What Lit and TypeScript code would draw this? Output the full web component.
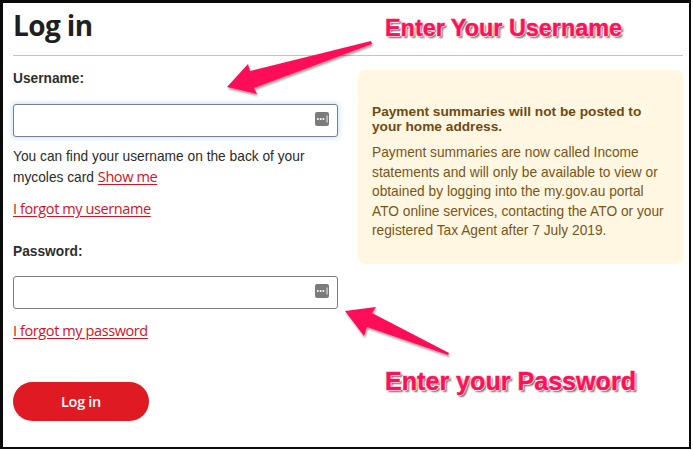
import { LitElement, html, css, svg } from "lit";
import { customElement } from "lit/decorators.js";

const keyIcon = svg`<svg class="key" width="14" height="14" viewBox="0 0 14 14" aria-hidden="true">
  <rect x="0" y="0" width="14" height="14" rx="2" fill="#7b7b7b"/>
  <circle cx="2.8" cy="7" r="1" fill="#fff"/><circle cx="5.6" cy="7" r="1" fill="#fff"/><circle cx="8.4" cy="7" r="1" fill="#fff"/>
  <rect x="11.6" y="3.5" width="0.9" height="7" fill="#fff"/>
</svg>`;

@customElement("app-root")
export class AppRoot extends LitElement {
  static styles = css`
    :host { display: block; width: 693px; height: 450px; background: #fff; }
    * { box-sizing: border-box; }
    .frame {
      position: relative; width: 691px; height: 449px; background: #fff; overflow: hidden;
      border-style: solid; border-color: #0a0a0a; border-width: 3px 2px 2px 3px;
      padding: 0 6px 0 10px; color: #2b2b2b;
      font: 13.75px/20px "Liberation Sans", Arial, sans-serif;
    }
    h1 {
      margin: 0; height: 53px; padding-top: 3px; border-bottom: 1px solid #c4c4c4;
      font: 700 28px/38px "Open Sans", sans-serif; letter-spacing: -0.6px; color: #1f1f1f;
    }
    .cols { display: flex; gap: 20px; }
    .left { width: 325px; flex: none; padding-top: 13px; }
    .right { flex: 1; padding-top: 14px; }
    label { display: block; font-weight: 700; line-height: 20px; color: #2e2e2e; }
    .field {
      display: flex; align-items: center; justify-content: flex-end;
      height: 33px; padding: 0 8px 4px 0; background: #fff;
      border: 1px solid #7d7d7d; border-radius: 3px;
    }
    .field.focus { margin-top: 15px; border-color: #76808e; box-shadow: 0 0 5px 1px rgba(120,175,235,.4); }
    .field.pw { margin-top: 14px; }
    .key { display: block; }
    .hint { margin: 10px 0 0; }
    a { color: #d8101f; text-decoration: underline; text-underline-offset: 2px; font: 14.5px/20px "Open Sans", sans-serif; letter-spacing: -0.4px; }
    .link { margin: 11px 0 0; }
    .pwlabel { margin-top: 22px; }
    .pwlink { margin-top: 12px; }
    button {
      display: block; width: 136px; height: 39px; margin-top: 40px; padding: 0; border: 0; border-radius: 20px;
      background: #e01a23; color: #fff; font: 600 14.5px "Open Sans", sans-serif; letter-spacing: -0.3px;
    }
    .notice {
      height: 194px; padding: 34px 14px 0; background: #fff7e1; border-radius: 7px; color: #7a5518;
      line-height: 19.5px;
    }
    .notice h2 { margin: 0 0 9px; font-size: 13.7px; line-height: 15px; font-weight: 700; color: #6f4a12; }
    .notice p { margin: 0; }
    .arrows { position: absolute; left: -3px; top: -3px; pointer-events: none; }
    .note {
      position: absolute; white-space: nowrap; color: #ff1059;
      font: 700 23.4px/26px "Liberation Sans", Arial, sans-serif;
      -webkit-text-stroke: 0.5px #ff1059;
      text-shadow: 1px 0 0 #fff, -1px 0 0 #fff, 0 -1px 0 #fff, 0 1px 0 #fff, 2px 2px 2px rgba(0,0,0,.6);
    }
    .n1 { left: 382px; top: 12px; }
    .n2 { left: 382px; top: 365px; font-size: 25.1px; }
  `;

  render() {
    return html`
      <div class="frame">
        <h1>Log in</h1>
        <div class="cols">
          <div class="left">
            <label>Username:</label>
            <div class="field focus">${keyIcon}</div>
            <p class="hint">You can find your username on the back of your<br />mycoles card <a href="#">Show me</a></p>
            <p class="link"><a href="#">I forgot my username</a></p>
            <label class="pwlabel">Password:</label>
            <div class="field pw">${keyIcon}</div>
            <p class="link pwlink"><a href="#">I forgot my password</a></p>
            <button>Log in</button>
          </div>
          <div class="right">
            <div class="notice">
              <h2>Payment summaries will not be posted to your home address.</h2>
              <p>Payment summaries are now called Income statements and will only be available to view or obtained by logging into the my.gov.au portal ATO online services, contacting the ATO or your registered Tax Agent after 7 July 2019.</p>
            </div>
          </div>
        </div>
        <svg class="arrows" width="693" height="450" viewBox="0 0 693 450" aria-hidden="true">
          <defs><filter id="s" x="-20%" y="-20%" width="140%" height="140%"><feDropShadow dx="1" dy="2" stdDeviation="1" flood-color="#000" flood-opacity=".4"/></filter></defs>
          <polygon filter="url(#s)" fill="#ff1059" points="227,87 248,64 250,71 371,41 372,44 254,88 257,94"/>
          <polygon filter="url(#s)" fill="#ff1059" points="345,311 376,307 372,313 449,353 448,355 367,327 364,336"/>
        </svg>
        <div class="note n1">Enter Your Username</div>
        <div class="note n2">Enter your Password</div>
      </div>
    `;
  }
}
